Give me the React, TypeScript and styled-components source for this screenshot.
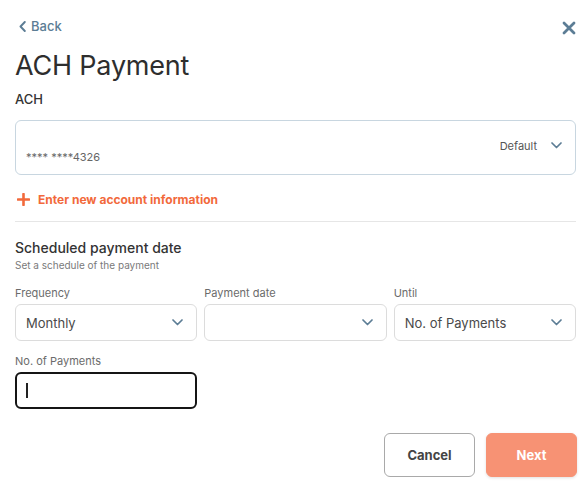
import React from "react";
import styled, { createGlobalStyle } from "styled-components";

const Global = createGlobalStyle`
  html, body { margin: 0; padding: 0; background: #fff; }
  body { font-family: Inter, "Open Sans", Arial, sans-serif; color: #333; }
  * { box-sizing: border-box; }
`;

const Page = styled.div`
  width: 586px;
  height: 485px;
  padding: 17px 10px 0 15px;
  display: flex;
  flex-direction: column;
`;

const TopBar = styled.div`
  display: flex;
  align-items: center;
  justify-content: space-between;
  height: 18px;
`;

const BackLink = styled.a`
  display: flex;
  align-items: center;
  gap: 5px;
  margin-left: 4px;
  color: #5c7d95;
  font-size: 13px;
  font-weight: 500;
  text-decoration: none;
`;

const CloseButton = styled.button`
  border: 0;
  background: none;
  padding: 0;
  width: 14px;
  height: 14px;
  display: flex;
  margin-top: 3px;
`;

const Title = styled.h1`
  margin: 14px 0 0;
  font-size: 27px;
  font-weight: 400;
  color: #2e2e2e;
  letter-spacing: -0.2px;
  line-height: 34px;
`;

const FieldLabel = styled.div<{ $size?: number; $weight?: number; $color?: string }>`
  font-size: ${(p) => p.$size ?? 11}px;
  font-weight: ${(p) => p.$weight ?? 400};
  color: ${(p) => p.$color ?? "#6b6b6b"};
  line-height: 16px;
`;

const AccountBox = styled.div`
  margin-top: 13px;
  height: 55px;
  border: 1px solid #c8d6e0;
  border-radius: 6px;
  display: flex;
  align-items: center;
  justify-content: space-between;
  padding: 0 13px 0 10px;
`;

const MaskedNumber = styled.span`
  font-size: 11px;
  color: #666;
  align-self: flex-end;
  margin-bottom: 10px;
`;

const DefaultTag = styled.span`
  display: flex;
  align-items: center;
  gap: 14px;
  font-size: 11px;
  color: #555;
  margin-top: -4px;
`;

const AddLink = styled.a`
  display: flex;
  align-items: center;
  gap: 8px;
  margin-top: 16px;
  margin-left: 2px;
  color: #f2693b;
  font-size: 12px;
  font-weight: 700;
  height: 16px;
`;

const Divider = styled.hr`
  border: 0;
  border-top: 1px solid #e6e6e6;
  margin: 14px 0 0;
`;

const SectionTitle = styled.h2`
  margin: 17px 0 0;
  font-size: 14px;
  font-weight: 500;
  color: #333;
  line-height: 18px;
`;

const SubText = styled.div`
  font-size: 10px;
  color: #7a7a7a;
  line-height: 16px;
`;

const Grid = styled.div`
  display: grid;
  grid-template-columns: repeat(3, 1fr);
  column-gap: 7px;
  margin-top: 12px;
`;

const Field = styled.div`
  display: flex;
  flex-direction: column;
  gap: 3px;
`;

const SelectBox = styled.div`
  height: 37px;
  border: 1px solid #dcdcdc;
  border-radius: 6px;
  display: flex;
  align-items: center;
  justify-content: space-between;
  padding: 0 13px 0 10px;
  font-size: 13px;
  color: #4a4a4a;
`;

const TextInput = styled.div`
  width: 182px;
  height: 37px;
  border: 2px solid #151515;
  border-radius: 6px;
  display: flex;
  align-items: center;
  padding-left: 9px;
`;

const Caret = styled.span`
  width: 1.5px;
  height: 15px;
  background: #222;
`;

const Footer = styled.div`
  display: flex;
  justify-content: flex-end;
  gap: 11px;
  margin: 24px -1px 0 0;
`;

const Button = styled.button<{ $primary?: boolean }>`
  width: 91px;
  height: 44px;
  border-radius: 6px;
  font-family: inherit;
  font-size: 13px;
  font-weight: 700;
  border: 1px solid ${(p) => (p.$primary ? "#f79274" : "#a9a9a9")};
  background: ${(p) => (p.$primary ? "#f79274" : "#fff")};
  color: ${(p) => (p.$primary ? "#fff" : "#444")};
  box-shadow: ${(p) => (p.$primary ? "0 1px 3px rgba(0,0,0,0.12)" : "none")};
`;

const Chevron = ({ color = "#5c7d95" }: { color?: string }) => (
  <svg width="11" height="7" viewBox="0 0 11 7" fill="none">
    <path d="M1 1l4.5 4.5L10 1" stroke={color} strokeWidth="1.7" strokeLinecap="round" strokeLinejoin="round" />
  </svg>
);

const Select = ({ label, value }: { label: string; value?: string }) => (
  <Field>
    <FieldLabel>{label}</FieldLabel>
    <SelectBox>
      <span>{value ?? ""}</span>
      <Chevron />
    </SelectBox>
  </Field>
);

export default function App() {
  return (
    <>
      <Global />
      <Page>
        <TopBar>
          <BackLink>
            <svg width="7" height="11" viewBox="0 0 7 11" fill="none">
              <path d="M5.8 1L1.5 5.5l4.3 4.5" stroke="#5c7d95" strokeWidth="1.9" strokeLinecap="round" strokeLinejoin="round" />
            </svg>
            Back
          </BackLink>
          <CloseButton aria-label="Close">
            <svg width="14" height="14" viewBox="0 0 14 14">
              <path d="M2 2l10 10M12 2L2 12" stroke="#5c7d95" strokeWidth="2.8" strokeLinecap="round" />
            </svg>
          </CloseButton>
        </TopBar>
        <Title>ACH Payment</Title>
        <FieldLabel $size={13} $weight={500} $color="#333" style={{ marginTop: 8 }}>
          ACH
        </FieldLabel>
        <AccountBox>
          <MaskedNumber>**** ****4326</MaskedNumber>
          <DefaultTag>
            Default
            <Chevron />
          </DefaultTag>
        </AccountBox>
        <AddLink>
          <svg width="13" height="13" viewBox="0 0 13 13">
            <path d="M6.5 1v11M1 6.5h11" stroke="#f2693b" strokeWidth="2.6" strokeLinecap="round" />
          </svg>
          Enter new account information
        </AddLink>
        <Divider />
        <SectionTitle>Scheduled payment date</SectionTitle>
        <SubText>Set a schedule of the payment</SubText>
        <Grid>
          <Select label="Frequency" value="Monthly" />
          <Select label="Payment date" />
          <Select label="Until" value="No. of Payments" />
        </Grid>
        <Field style={{ marginTop: 12 }}>
          <FieldLabel>No. of Payments</FieldLabel>
          <TextInput>
            <Caret />
          </TextInput>
        </Field>
        <Footer>
          <Button>Cancel</Button>
          <Button $primary>Next</Button>
        </Footer>
      </Page>
    </>
  );
}
